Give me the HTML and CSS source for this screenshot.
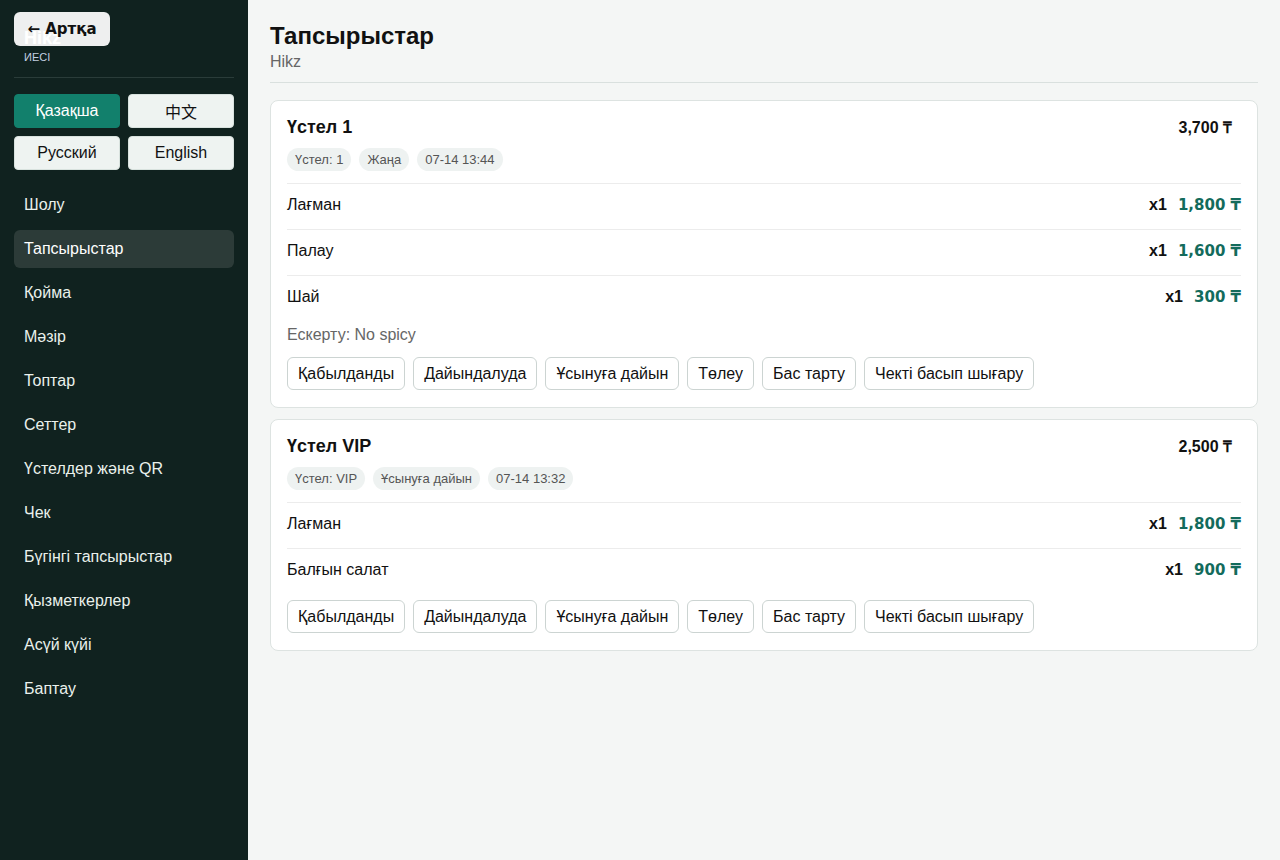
FILE: index.html
```html
<!DOCTYPE html>
<html>

<head>
    <title>Тапсырыстар</title>
    <link rel="stylesheet" href="styles.css">
</head>

<body>
    <div class="layout">
        <aside class="sidebar">
            <div class="brand">
                <div class="brand-name">Hikz</div>
                <div class="brand-role">ИЕСІ</div>
                <button class="back-btn">← Артқа</button>
            </div>

            <div class="langs">
                <button class="lang active">Қазақша</button>
                <button class="lang">中文</button>
                <button class="lang">Русский</button>
                <button class="lang">English</button>
            </div>

            <nav class="nav">
                <a class="nav-item">Шолу</a>
                <a class="nav-item active">Тапсырыстар</a>
                <a class="nav-item">Қойма</a>
                <a class="nav-item">Мәзір</a>
                <a class="nav-item">Топтар</a>
                <a class="nav-item">Сеттер</a>
                <a class="nav-item">Үстелдер және QR</a>
                <a class="nav-item">Чек</a>
                <a class="nav-item">Бүгінгі тапсырыстар</a>
                <a class="nav-item">Қызметкерлер</a>
                <a class="nav-item">Асүй күйі</a>
                <a class="nav-item">Баптау</a>
            </nav>
        </aside>

        <main class="main">
            <div class="page-head">
                <h1>Тапсырыстар</h1>
                <div class="page-sub">Hikz</div>
            </div>

            <!-- order 1 -->
            <div class="card">
                <div class="card-head">
                    <div>
                        <div class="card-title">Үстел 1</div>
                        <div class="chips">
                            <span class="chip">Үстел: 1</span>
                            <span class="chip">Жаңа</span>
                            <span class="chip">07-14 13:44</span>
                        </div>
                    </div>
                    <div class="total">3,700 ₸</div>
                </div>
                <div class="item">
                    <span>Лағман</span>
                    <span class="item-right"><b class="qty">x1</b><b class="price">1,800 ₸</b></span>
                </div>
                <div class="item">
                    <span>Палау</span>
                    <span class="item-right"><b class="qty">x1</b><b class="price">1,600 ₸</b></span>
                </div>
                <div class="item">
                    <span>Шай</span>
                    <span class="item-right"><b class="qty">x1</b><b class="price">300 ₸</b></span>
                </div>
                <div class="note">Ескерту: No spicy</div>
                <div class="actions">
                    <button class="act">Қабылданды</button>
                    <button class="act">Дайындалуда</button>
                    <button class="act">Ұсынуға дайын</button>
                    <button class="act">Төлеу</button>
                    <button class="act">Бас тарту</button>
                    <button class="act">Чекті басып шығару</button>
                </div>
            </div>

            <!-- order 2 -->
            <div class="card">
                <div class="card-head">
                    <div>
                        <div class="card-title">Үстел VIP</div>
                        <div class="chips">
                            <span class="chip">Үстел: VIP</span>
                            <span class="chip">Ұсынуға дайын</span>
                            <span class="chip">07-14 13:32</span>
                        </div>
                    </div>
                    <div class="total">2,500 ₸</div>
                </div>
                <div class="item">
                    <span>Лағман</span>
                    <span class="item-right"><b class="qty">x1</b><b class="price">1,800 ₸</b></span>
                </div>
                <div class="item">
                    <span>Балғын салат</span>
                    <span class="item-right"><b class="qty">x1</b><b class="price">900 ₸</b></span>
                </div>
                <div class="actions">
                    <button class="act">Қабылданды</button>
                    <button class="act">Дайындалуда</button>
                    <button class="act">Ұсынуға дайын</button>
                    <button class="act">Төлеу</button>
                    <button class="act">Бас тарту</button>
                    <button class="act">Чекті басып шығару</button>
                </div>
            </div>
        </main>
    </div>
</body>

</html>
```

FILE: styles.css
```css
* { box-sizing: border-box; }

body {
    margin: 0;
    font-family: "Liberation Sans", Arial, "Noto Sans CJK SC", sans-serif;
    font-size: 16px;
    color: #111;
    background-color: #f4f6f5;
}

.layout {
    display: flex;
    min-height: 860px;
}

/* sidebar */
.sidebar {
    width: 248px;
    flex-shrink: 0;
    background-color: #10221f;
    padding: 14px;
}

.brand {
    position: relative;
    padding: 13px 10px 13px;
    border-bottom: 1px solid #2a3c39;
}
.brand-name { color: #fff; font-weight: bold; font-size: 18px; line-height: 22px; }
.brand-role { color: #c4d0e0; font-size: 11px; line-height: 14px; margin-top: 1px; }

/* see-through, the brand name shows under it */
.back-btn {
    position: absolute;
    top: -2px;
    left: 0;
    width: 96px;
    height: 34px;
    border: 0;
    border-radius: 6px;
    background-color: rgba(255, 255, 255, 0.93);
    color: #111;
    font-family: "DejaVu Sans", sans-serif;
    font-weight: bold;
    font-size: 15px;
    padding: 0;
}

.langs {
    display: grid;
    grid-template-columns: 1fr 1fr;
    gap: 8px;
    margin-top: 16px;
}
.lang {
    height: 34px;
    border: 1px solid #d8e2de;
    border-radius: 4px;
    background-color: #eef3f1;
    color: #111;
    font-family: inherit;
    font-size: 16px;
}
.lang.active { background-color: #12806c; border-color: #12806c; color: #fff; }

.nav {
    display: flex;
    flex-direction: column;
    gap: 6px;
    margin-top: 16px;
}
.nav-item {
    height: 38px;
    line-height: 38px;
    padding: 0 10px;
    color: #eaf1ec;
    border-radius: 6px;
}
.nav-item.active { background-color: #2c3b38; color: #fff; }

/* main */
.main {
    flex: 1;
    padding: 21px 22px;
}

.page-head {
    padding-bottom: 9px;
    border-bottom: 1px solid #d9e0de;
    margin-bottom: 17px;
}
.page-head h1 { margin: 0; font-size: 24px; line-height: 30px; }
.page-sub { color: #666; font-size: 16px; line-height: 22px; }

.card {
    background-color: #fff;
    border: 1px solid #dde3e1;
    border-radius: 8px;
    padding: 15px 16px 17px 16px;
    margin-bottom: 11px;
}

.card-head {
    display: flex;
    justify-content: space-between;
    align-items: flex-start;
    padding-bottom: 12px;
}
.card-title { font-size: 18px; font-weight: bold; line-height: 22px; }
.total { font-weight: bold; font-size: 16px; margin-right: 9px; }

.chips { display: flex; gap: 8px; margin-top: 10px; }
.chip {
    background-color: #eef2f1;
    color: #555;
    font-size: 13px;
    line-height: 23px;
    padding: 0 8px;
    border-radius: 12px;
}

.item {
    display: flex;
    justify-content: space-between;
    align-items: center;
    height: 46px;
    padding-bottom: 4px;
    border-top: 1px solid #ececec;
}
.item-right { display: flex; align-items: baseline; gap: 11px; }
.qty { font-size: 16px; }
.price { font-family: "DejaVu Sans", sans-serif; font-size: 15px; color: #136b5c; }

.note { color: #666; font-size: 16px; line-height: 20px; padding: 4px 0 6px; }

.actions { display: flex; gap: 8px; margin-top: 6px; }
.act {
    height: 33px;
    padding: 0 10px;
    background-color: #fff;
    border: 1px solid #ccd4d2;
    border-radius: 6px;
    color: #111;
    font-family: inherit;
    font-size: 16px;
}
```
